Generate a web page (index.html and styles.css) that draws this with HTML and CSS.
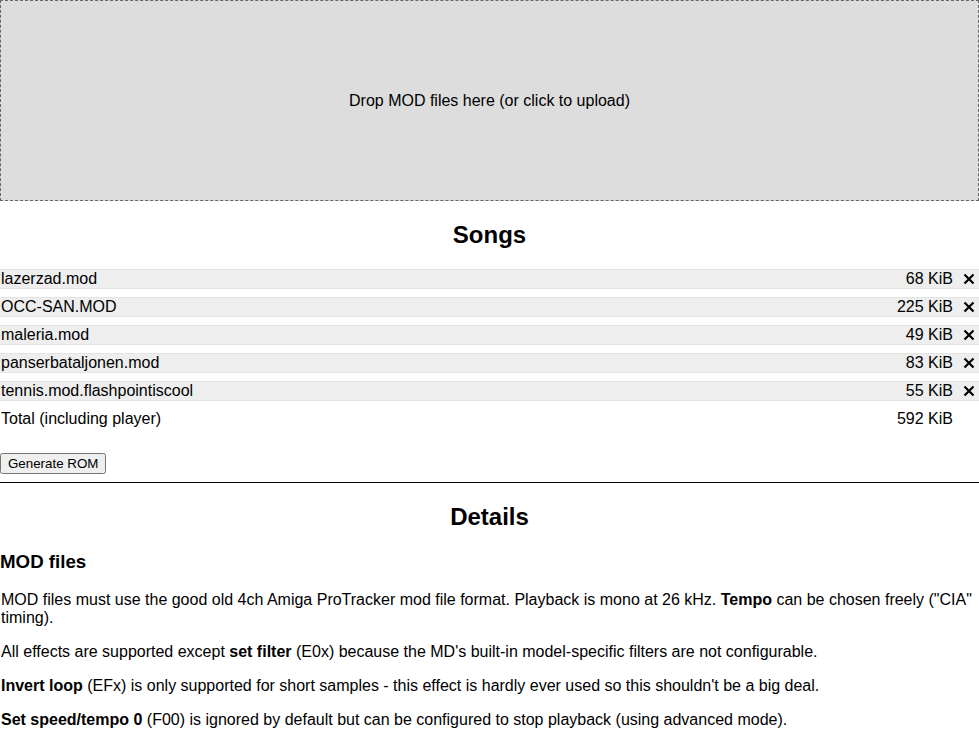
FILE: index.html
```html
<!DOCTYPE html>
<html>
<head>
<meta charset="utf-8">
<title>MOD ROM builder</title>
<link rel="stylesheet" href="styles.css">
</head>
<body>
<div class="dropzone">Drop MOD files here (or click to upload)</div>
<h2>Songs</h2>
<div class="songs">
  <div class="song"><span class="name">lazerzad.mod</span><span class="size">68 KiB</span><span class="remove"><svg viewBox="0 0 12 12" width="12" height="12"><path d="M1.5 1.5L10.5 10.5M10.5 1.5L1.5 10.5" stroke="#000" stroke-width="2.2"/></svg></span></div>
  <div class="song"><span class="name">OCC-SAN.MOD</span><span class="size">225 KiB</span><span class="remove"><svg viewBox="0 0 12 12" width="12" height="12"><path d="M1.5 1.5L10.5 10.5M10.5 1.5L1.5 10.5" stroke="#000" stroke-width="2.2"/></svg></span></div>
  <div class="song"><span class="name">maleria.mod</span><span class="size">49 KiB</span><span class="remove"><svg viewBox="0 0 12 12" width="12" height="12"><path d="M1.5 1.5L10.5 10.5M10.5 1.5L1.5 10.5" stroke="#000" stroke-width="2.2"/></svg></span></div>
  <div class="song"><span class="name">panserbataljonen.mod</span><span class="size">83 KiB</span><span class="remove"><svg viewBox="0 0 12 12" width="12" height="12"><path d="M1.5 1.5L10.5 10.5M10.5 1.5L1.5 10.5" stroke="#000" stroke-width="2.2"/></svg></span></div>
  <div class="song"><span class="name">tennis.mod.flashpointiscool</span><span class="size">55 KiB</span><span class="remove"><svg viewBox="0 0 12 12" width="12" height="12"><path d="M1.5 1.5L10.5 10.5M10.5 1.5L1.5 10.5" stroke="#000" stroke-width="2.2"/></svg></span></div>
  <div class="total"><span class="name">Total (including player)</span><span class="size">592 KiB</span><span class="remove"></span></div>
</div>
<p class="actions"><button type="button">Generate ROM</button></p>
<hr>
<h2>Details</h2>
<h3>MOD files</h3>
<p>MOD files must use the good old 4ch Amiga ProTracker mod file format. Playback is mono at 26 kHz. <b>Tempo</b> can be chosen freely ("CIA" timing).</p>
<p>All effects are supported except <b>set filter</b> (E0x) because the MD's built-in model-specific filters are not configurable.</p>
<p><b>Invert loop</b> (EFx) is only supported for short samples - this effect is hardly ever used so this shouldn't be a big deal.</p>
<p><b>Set speed/tempo 0</b> (F00) is ignored by default but can be configured to stop playback (using advanced mode).</p>
</body>
</html>
```
FILE: styles.css
```css
body {
  margin: 0;
  font-family: "Liberation Sans", Arial, sans-serif;
  font-size: 16px;
  color: #000;
  background: #fff;
}
.dropzone {
  height: 199px;
  border: 1px dashed #666;
  background: #ddd;
  display: flex;
  align-items: center;
  justify-content: center;
  cursor: pointer;
}
h2 {
  text-align: center;
  font-size: 24px;
  margin: 20px 0;
}
h3 {
  font-size: 18.72px;
  margin: 18px 0;
}
.songs {
  display: flex;
  flex-direction: column;
  gap: 8px;
}
.song, .total {
  display: flex;
  align-items: center;
  height: 20px;
  box-sizing: border-box;
  padding-left: 1px;
}
.song {
  background: #eee;
  border-top: 1px solid #e4e4e4;
  border-bottom: 1px solid #e4e4e4;
}
.name {
  flex: 1;
}
.size {
  text-align: right;
}
.remove {
  width: 26px;
  display: flex;
  align-items: center;
  justify-content: flex-end;
  padding-right: 4px;
  box-sizing: border-box;
}
.remove svg {
  display: block;
}
.actions {
  margin: 24px 0 8px;
  padding-left: 0;
}
button {
  font-family: "Liberation Sans", Arial, sans-serif;
  font-size: 13.33px;
}
hr {
  border: 0;
  border-top: 1px solid #000;
  margin: 0;
}
p {
  margin: 16px 0;
  padding-left: 1px;
}
```
